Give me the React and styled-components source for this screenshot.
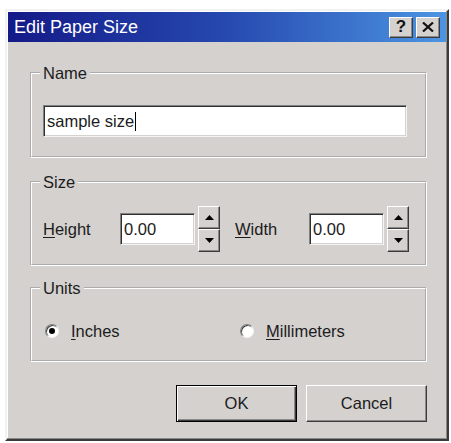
import styled, { createGlobalStyle } from "styled-components";

const Global = createGlobalStyle`
  body {
    margin: 0;
    background: #fff;
    font-family: "Liberation Sans", Arial, sans-serif;
    color: #1c1c1c;
  }
`;

const Window = styled.div`
  box-sizing: border-box;
  width: 444px;
  height: 432px;
  margin: 9px 0 0 5px;
  padding: 1px;
  display: flex;
  flex-direction: column;
  background: #d4d1cf;
  border: 2px solid;
  border-color: #f2f2f2 #3a3a3a #3a3a3a #f2f2f2;
  box-shadow: inset -1px -1px #8a8a8a, inset 1px 1px #fff;
`;

const TitleBar = styled.div`
  height: 30px;
  display: flex;
  align-items: center;
  justify-content: space-between;
  padding: 0 6px 0 6px;
  background: linear-gradient(to right, #141a88 0%, #2649b0 50%, #4c95e2 100%);
  color: #fff;
  font-size: 18px;
`;

const TitleButtons = styled.div`
  display: flex;
  gap: 3px;
`;

const TitleButton = styled.div`
  box-sizing: border-box;
  width: 24px;
  height: 21px;
  display: flex;
  align-items: center;
  justify-content: center;
  background: #d4d1cf;
  color: #111;
  font-weight: bold;
  font-size: 17px;
  border: 1px solid;
  border-color: #fff #3a3a3a #3a3a3a #fff;
  box-shadow: inset -1px -1px #8a8a8a;
`;

const Body = styled.div`
  padding: 22px 19px 0 22px;
  display: flex;
  flex-direction: column;
`;

const Group = styled.fieldset`
  margin: ${(p) => p.$mt}px 0 0;
  padding: ${(p) => p.$pad};
  border: 2px groove #fff;
  min-width: 0;
`;

const Legend = styled.legend`
  padding: 0 3px;
  margin-left: -3px;
  font-size: 16.5px;
  line-height: 18px;
`;

const TextField = styled.div`
  box-sizing: border-box;
  height: ${(p) => p.$h || 32}px;
  width: ${(p) => (p.$w ? `${p.$w}px` : "100%")};
  display: flex;
  align-items: center;
  padding-left: 3px;
  background: #fff;
  font-size: 16.5px;
  border: 1px solid;
  border-color: #808080 #f4f4f4 #f4f4f4 #808080;
  box-shadow: inset 1px 1px #303030, inset -1px -1px #d4d1cf;
`;

const Caret = styled.span`
  display: inline-block;
  width: 1px;
  height: 19px;
  background: #000;
  margin-left: 1px;
`;

const SizeRow = styled.div`
  display: flex;
  align-items: center;
  height: 46px;
`;

const Label = styled.span`
  width: ${(p) => p.$w}px;
  margin-left: ${(p) => p.$ml || 0}px;
  font-size: 16.5px;
`;

const Key = styled.span`
  text-decoration: underline;
  text-underline-offset: 2px;
`;

const Spinner = styled.div`
  display: flex;
  flex-direction: column;
  width: 22px;
  height: 46px;
  margin-left: 3px;
`;

const SpinButton = styled.div`
  flex: 1;
  display: flex;
  align-items: center;
  justify-content: center;
  background: #d4d1cf;
  border: 1px solid;
  border-color: #fff #3a3a3a #3a3a3a #fff;
  box-shadow: inset -1px -1px #8a8a8a;
`;

const RadioRow = styled.div`
  display: grid;
  grid-template-columns: 195px 1fr;
  align-items: center;
  height: 20px;
  padding-left: 2px;
`;

const RadioOption = styled.label`
  display: flex;
  align-items: center;
  gap: 12px;
  font-size: 16.5px;
`;

const RadioDot = styled.span`
  box-sizing: border-box;
  width: 14px;
  height: 14px;
  border-radius: 50%;
  background: #fff;
  border: 1px solid;
  border-color: #808080 #f4f4f4 #f4f4f4 #808080;
  box-shadow: inset 1px 1px #404040;
  display: flex;
  align-items: center;
  justify-content: center;

  &::after {
    content: "";
    width: 6px;
    height: 6px;
    border-radius: 50%;
    background: ${(p) => (p.$checked ? "#000" : "transparent")};
  }
`;

const ButtonRow = styled.div`
  display: flex;
  justify-content: flex-end;
  gap: 9px;
  margin-top: 23px;
`;

const Button = styled.div`
  box-sizing: border-box;
  width: 121px;
  height: 37px;
  display: flex;
  align-items: center;
  justify-content: center;
  font-size: 16.5px;
  background: #d4d1cf;
  border: 1px solid;
  border-color: ${(p) => (p.$default ? "#000" : "#fff #3a3a3a #3a3a3a #fff")};
  box-shadow: ${(p) =>
    p.$default
      ? "inset 1px 1px #fff, inset -1px -1px #3a3a3a, inset -2px -2px #8a8a8a"
      : "inset -1px -1px #8a8a8a"};
`;

const Arrow = ({ up }) => (
  <svg width="9" height="5" viewBox="0 0 9 5">
    <path d={up ? "M4.5 0 L9 5 L0 5 Z" : "M0 0 L9 0 L4.5 5 Z"} fill="#000" />
  </svg>
);

const SpinBox = () => (
  <>
    <TextField $w={75}>0.00</TextField>
    <Spinner>
      <SpinButton>
        <Arrow up />
      </SpinButton>
      <SpinButton>
        <Arrow />
      </SpinButton>
    </Spinner>
  </>
);

export default function App() {
  return (
    <>
      <Global />
      <Window>
        <TitleBar>
          <span>Edit Paper Size</span>
          <TitleButtons>
            <TitleButton>?</TitleButton>
            <TitleButton>
              <svg width="12" height="10" viewBox="0 0 12 10">
                <path d="M1 0.5 L11 9.5 M11 0.5 L1 9.5" stroke="#111" strokeWidth="2.2" />
              </svg>
            </TitleButton>
          </TitleButtons>
        </TitleBar>
        <Body>
          <Group $mt={0} $pad="23px 18px 19px 11px">
            <Legend>Name</Legend>
            <TextField>
              sample size
              <Caret />
            </TextField>
          </Group>
          <Group $mt={15} $pad="15px 10px 12px 11px">
            <Legend>Size</Legend>
            <SizeRow>
              <Label $w={77}>
                <Key>H</Key>eight
              </Label>
              <SpinBox />
              <Label $w={74} $ml={15}>
                <Key>W</Key>idth
              </Label>
              <SpinBox />
            </SizeRow>
          </Group>
          <Group $mt={13} $pad="24px 10px 19px 11px">
            <Legend>Units</Legend>
            <RadioRow>
              <RadioOption>
                <RadioDot $checked />
                <span>
                  <Key>I</Key>nches
                </span>
              </RadioOption>
              <RadioOption>
                <RadioDot />
                <span>
                  <Key>M</Key>illimeters
                </span>
              </RadioOption>
            </RadioRow>
          </Group>
          <ButtonRow>
            <Button $default>OK</Button>
            <Button>Cancel</Button>
          </ButtonRow>
        </Body>
      </Window>
    </>
  );
}
